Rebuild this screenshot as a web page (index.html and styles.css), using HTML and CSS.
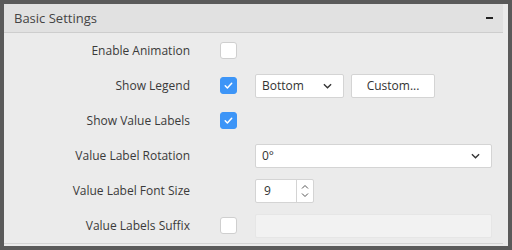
FILE: index.html
```html
<!DOCTYPE html>
<html lang="en">
<head>
  <meta charset="UTF-8">
  <link rel="stylesheet" href="styles.css">
</head>
<body>
  <div class="frame">
    <div class="panel">
      <div class="header">
        <span class="title">Basic Settings</span>
        <span class="collapse"></span>
      </div>
      <div class="rows">
        <div class="row">
          <label class="label">Enable Animation</label>
          <span class="check"></span>
          <span></span>
        </div>
        <div class="row">
          <label class="label">Show Legend</label>
          <span class="check on">
            <svg viewBox="0 0 16 16"><path d="M4.5 8.3l2.3 2.3 4.6-5" fill="none" stroke="#fff" stroke-width="1.6" stroke-linecap="round" stroke-linejoin="round"/></svg>
          </span>
          <div class="controls">
            <div class="select small">
              <span>Bottom</span>
              <svg class="chev" viewBox="0 0 10 6"><path d="M1 1l4 4 4-4" fill="none" stroke="#333" stroke-width="1.5"/></svg>
            </div>
            <div class="button">Custom...</div>
          </div>
        </div>
        <div class="row">
          <label class="label">Show Value Labels</label>
          <span class="check on">
            <svg viewBox="0 0 16 16"><path d="M4.5 8.3l2.3 2.3 4.6-5" fill="none" stroke="#fff" stroke-width="1.6" stroke-linecap="round" stroke-linejoin="round"/></svg>
          </span>
          <span></span>
        </div>
        <div class="row">
          <label class="label">Value Label Rotation</label>
          <span></span>
          <div class="select wide">
            <span>0°</span>
            <svg class="chev" viewBox="0 0 10 6"><path d="M1 1l4 4 4-4" fill="none" stroke="#333" stroke-width="1.5"/></svg>
          </div>
        </div>
        <div class="row">
          <label class="label">Value Label Font Size</label>
          <span></span>
          <div class="number">
            <span class="value">9</span>
            <span class="spin">
              <svg viewBox="0 0 8 5"><path d="M1 4.5l3-3 3 3" fill="none" stroke="#555" stroke-width="1"/></svg>
              <svg viewBox="0 0 8 5"><path d="M1 0.5l3 3 3-3" fill="none" stroke="#555" stroke-width="1"/></svg>
            </span>
          </div>
        </div>
        <div class="row">
          <label class="label">Value Labels Suffix</label>
          <span class="check"></span>
          <div class="textbox"></div>
        </div>
      </div>
    </div>
  </div>
</body>
</html>
```

FILE: styles.css
```css
* {
  margin: 0;
  padding: 0;
  box-sizing: border-box;
}

body {
  background: #5a5a5a;
  padding: 4px;
  font-family: "Open Sans", "Noto Sans", sans-serif;
  font-size: 12px;
  color: #333;
}

.frame {
  width: 504px;
  height: 242px;
  background: #ebebeb;
  padding-right: 5px;
}

.panel {
  height: 240px;
  border-bottom: 1px solid #d4d4d4;
}

.header {
  height: 29px;
  background: #e1e1e1;
  border-bottom: 1px solid #cdcdcd;
  display: flex;
  align-items: center;
  justify-content: space-between;
  padding: 0 10px 0 10px;
}

.title {
  font-size: 13px;
  color: #444;
}

.collapse {
  width: 7px;
  height: 2px;
  background: #222;
  margin-right: 0;
}

.row {
  height: 35px;
  display: grid;
  grid-template-columns: 186px 17px 1fr;
  column-gap: 30px;
  align-items: center;
  padding-right: 11px;
}

.row > :nth-child(3) {
  margin-left: -12px;
}

.label {
  text-align: right;
  color: #3a3a3a;
}

.check {
  width: 17px;
  height: 17px;
  background: #fff;
  border: 1px solid #cfcfcf;
  border-radius: 3px;
  display: flex;
  align-items: center;
  justify-content: center;
}

.check.on {
  background: #3d95f7;
  border-color: #3d95f7;
}

.check svg {
  width: 15px;
  height: 15px;
}

.controls {
  display: flex;
  gap: 7px;
}

.select,
.button,
.number,
.textbox {
  height: 24px;
  background: #fff;
  border: 1px solid #d4d4d4;
  border-radius: 2px;
}

.select {
  display: flex;
  align-items: center;
  justify-content: space-between;
  padding: 0 11px 0 6px;
}

.select.small {
  width: 89px;
}

.chev {
  width: 9px;
  height: 6px;
}

.button {
  width: 84px;
  display: flex;
  align-items: center;
  justify-content: center;
}

.number {
  width: 59px;
  display: flex;
}

.number .value {
  width: 41px;
  border-right: 1px solid #d4d4d4;
  padding-left: 8px;
  line-height: 22px;
}

.spin {
  flex: 1;
  display: flex;
  flex-direction: column;
  align-items: center;
  justify-content: center;
  gap: 4px;
}

.spin svg {
  width: 8px;
  height: 5px;
}

.textbox {
  background: #f2f2f2;
  border-color: #e6e6e6;
}
```
